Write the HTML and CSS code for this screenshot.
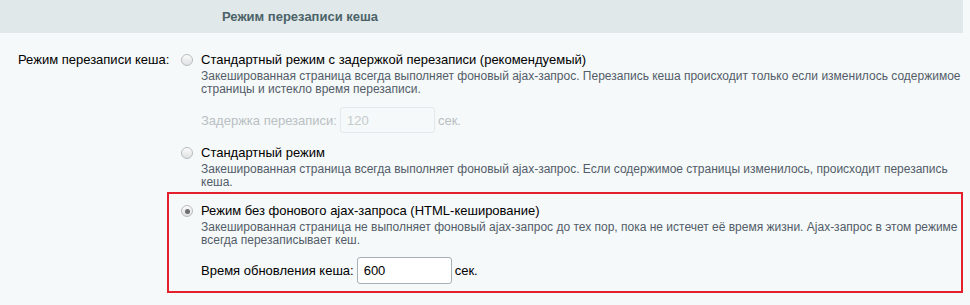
FILE: index.html
```html
<!DOCTYPE html>
<html lang="ru">
<head>
    <meta charset="UTF-8">
    <title>Режим перезаписи кеша</title>
    <link rel="stylesheet" href="styles.css">
</head>
<body>
    <div class="heading">Режим перезаписи кеша</div>
    <div class="field-row">
        <div class="field-label">Режим перезаписи кеша:</div>
        <div class="field-options">
            <div class="option">
                <span class="radio"></span>
                <div class="option-body">
                    <div class="option-title">Стандартный режим с задержкой перезаписи (рекомендуемый)</div>
                    <div class="option-desc">Закешированная страница всегда выполняет фоновый ajax-запрос. Перезапись кеша происходит только если изменилось содержимое страницы и истекло время перезаписи.</div>
                    <div class="option-input disabled">
                        <span>Задержка перезаписи:</span>
                        <input type="text" value="120" disabled>
                        <span>сек.</span>
                    </div>
                </div>
            </div>
            <div class="option">
                <span class="radio"></span>
                <div class="option-body">
                    <div class="option-title">Стандартный режим</div>
                    <div class="option-desc">Закешированная страница всегда выполняет фоновый ajax-запрос. Если содержимое страницы изменилось, происходит перезапись кеша.</div>
                </div>
            </div>
            <div class="option highlighted">
                <span class="radio checked"></span>
                <div class="option-body">
                    <div class="option-title">Режим без фонового ajax-запроса (HTML-кеширование)</div>
                    <div class="option-desc">Закешированная страница не выполняет фоновый ajax-запрос до тех пор, пока не истечет её время жизни. Ajax-запрос в этом режиме всегда перезаписывает кеш.</div>
                    <div class="option-input">
                        <span>Время обновления кеша:</span>
                        <input type="text" value="600">
                        <span>сек.</span>
                    </div>
                </div>
            </div>
        </div>
    </div>
</body>
</html>
```

FILE: styles.css
```css
* {
    margin: 0;
    padding: 0;
    box-sizing: border-box;
}

body {
    font-family: 'Liberation Sans', Arial, sans-serif;
    font-size: 13px;
    color: #000;
    background: #f5f9f9;
    padding-right: 7px;
}

.heading {
    height: 33px;
    line-height: 33px;
    padding-left: 222px;
    background: #e0e8ea;
    color: #4b6267;
    font-weight: bold;
}

.field-row {
    display: flex;
    padding-top: 19px;
}

.field-label {
    width: 167px;
    flex-shrink: 0;
    padding-left: 18px;
    line-height: 16px;
    white-space: nowrap;
}

.field-options {
    flex: 1;
}

.option {
    display: flex;
    padding-left: 14px;
}

.option + .option {
    margin-top: 12px;
}

.option.highlighted {
    border: 2px solid #e3202b;
    padding: 9px 0 7px 12px;
    margin-top: 3px;
}

.radio {
    width: 12px;
    height: 12px;
    margin-top: 2px;
    margin-right: 8px;
    flex-shrink: 0;
    border-radius: 50%;
    border: 1px solid #b9bdc0;
    background: linear-gradient(#fbfbfb, #dfe1e2);
    display: flex;
    align-items: center;
    justify-content: center;
}

.radio.checked::after {
    content: '';
    width: 5px;
    height: 5px;
    border-radius: 50%;
    background: #6b6f72;
}

.option-body {
    flex: 1;
}

.option-title {
    line-height: 16px;
}

.option-desc {
    font-size: 12px;
    line-height: 13px;
    margin-top: 2px;
    color: #535c69;
}

.option-input {
    display: flex;
    align-items: center;
    gap: 3px;
    margin-top: 10px;
}

.option-input input {
    width: 95px;
    height: 27px;
    padding: 0 6px;
    border: 1px solid #a6b0b4;
    border-radius: 3px;
    background: #fff;
    font-family: inherit;
    font-size: 13px;
    color: #000;
}

.option-input.disabled {
    margin-top: 11px;
    color: #b9bfc3;
}

.option-input.disabled input {
    height: 26px;
    border-color: #e3e8ea;
    background: #f5f9f9;
    color: #c6cbcd;
}
```
